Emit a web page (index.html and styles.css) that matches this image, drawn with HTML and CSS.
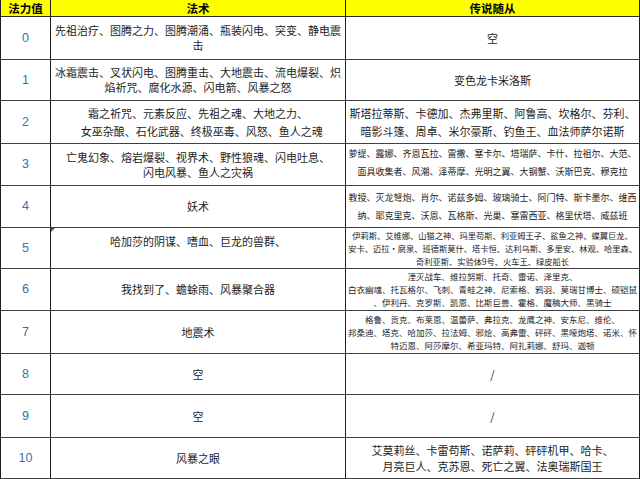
FILE: index.html
```html
<!DOCTYPE html>
<html lang="zh-CN">
<head>
<meta charset="utf-8">
<title>法力值表</title>
<link rel="stylesheet" href="styles.css">
</head>
<body>
<div class="sheet">
  <div class="cell hd c1">法力值</div>
  <div class="cell hd c2">法术</div>
  <div class="cell hd c3">传说随从</div>

  <div class="cell num c1">0</div>
  <div class="cell c2 f11 lh15">先祖治疗、图腾之力、图腾潮涌、瓶装闪电、突变、静电震<br>击</div>
  <div class="cell c3 f11">空</div>

  <div class="cell num c1">1</div>
  <div class="cell c2 f11 lh15">冰霜震击、叉状闪电、图腾重击、大地震击、流电爆裂、炽<br>焰祈咒、腐化水源、闪电箭、风暴之怒</div>
  <div class="cell c3 f11">变色龙卡米洛斯</div>

  <div class="cell num c1">2</div>
  <div class="cell c2 f11 lh18">霜之祈咒、元素反应、先祖之魂、大地之力、<br>&nbsp;&nbsp;&nbsp;女巫杂酿、石化武器、终极巫毒、风怒、鱼人之魂</div>
  <div class="cell c3 f11 lh18">斯塔拉蒂斯、卡德加、杰弗里斯、阿鲁高、坎格尔、芬利、<br>暗影斗篷、周卓、米尔豪斯、钓鱼王、血法师萨尔诺斯</div>

  <div class="cell num c1">3</div>
  <div class="cell c2 f11 lh15">亡鬼幻象、熔岩爆裂、视界术、野性狼魂、闪电吐息、<br>闪电风暴、鱼人之灾祸</div>
  <div class="cell c3 f9 lh18 up2">萝缇、露娜、齐恩瓦拉、雷撒、塞卡尔、塔瑞萨、卡什、拉祖尔、大范、<br>面具收集者、风潮、泽蒂摩、光明之翼、大钢蟹、沃斯巴克、穆克拉</div>

  <div class="cell num c1">4</div>
  <div class="cell c2 f11">妖术</div>
  <div class="cell c3 f9 lh18">教授、灭龙弩炮、肖尔、诺兹多姆、玻璃骑士、阿门特、斯卡墨尔、维西<br>纳、耶克里克、沃恩、瓦格斯、光巢、塞雷西亚、格里伏塔、威兹班</div>

  <div class="cell num c1">5</div>
  <div class="cell c2 f11 lh13 flag">哈加莎的阴谋、嗜血、巨龙的兽群、<br>&nbsp;</div>
  <div class="cell c3 f83 lh13">伊莉斯、艾维娜、山猫之神、玛里苟斯、利亚姆王子、鲨鱼之神、蝶翼巨龙、<br>安卡、迈拉·腐泉、班德斯莫什、塔卡恒、达利乌斯、多里安、林观、哈里森、<br>奇利亚斯、实验体9号、火车王、绿皮船长</div>

  <div class="cell num c1">6</div>
  <div class="cell c2 f11">我找到了、蟾蜍雨、风暴聚合器</div>
  <div class="cell c3 f85 lh13">湮灭战车、维拉努斯、托奇、雷诺、泽里克、<br>白衣幽魂、托瓦格尔、飞刺、青蛙之神、尼索格、鸦羽、莫瑞甘博士、硕铠鼠<br>、伊利丹、克罗斯、凯恩、比斯巨兽、霍格、魔稿大师、黑骑士</div>

  <div class="cell num c1">7</div>
  <div class="cell c2 f11">地震术</div>
  <div class="cell c3 f85 lh13">格鲁、贡克、布莱恩、温蕾萨、弗拉克、龙鹰之神、安东尼、维伦、<br>邦桑迪、塔克、哈加莎、拉法姆、邪烩、高弗雷、砰砰、黑嚎炮塔、诺米、怀<br>特迈恩、阿莎摩尔、希亚玛特、阿扎莉娜、舒玛、迦顿</div>

  <div class="cell num c1">8</div>
  <div class="cell c2 f11">空</div>
  <div class="cell c3 f11">/</div>

  <div class="cell num c1">9</div>
  <div class="cell c2 f11">空</div>
  <div class="cell c3 f11">/</div>

  <div class="cell num c1">10</div>
  <div class="cell c2 f11">风暴之眼</div>
  <div class="cell c3 f11 lh16">艾莫莉丝、卡雷苟斯、诺萨莉、砰砰机甲、哈卡、<br>月亮巨人、克苏恩、死亡之翼、法奥瑞斯国王</div>
</div>
</body>
</html>
```

FILE: styles.css
```css
html, body {
  margin: 0;
  padding: 0;
  background: #ffffff;
}

.sheet {
  display: grid;
  grid-template-columns: 51px 295px 294px;
  grid-template-rows: 17px 43px 41px 43px 42px 42px 41px 42px 43px 41px 43px 41px;
  width: 640px;
  font-family: "Noto Sans CJK SC", "Noto Sans", sans-serif;
  color: #1c1c1c;
}

.cell {
  box-sizing: border-box;
  display: flex;
  flex-direction: column;
  justify-content: center;
  align-items: center;
  text-align: center;
  white-space: nowrap;
  overflow: hidden;
  border-right: 1px solid #1e1e1e;
  border-bottom: 1px solid #404040;
  position: relative;
  line-height: 15px;
}

.c1 {
  border-left: 1px solid #1e1e1e;
}

.hd {
  background: #ffff00;
  font-weight: bold;
  font-size: 11.5px;
  line-height: 14px;
  color: #000000;
  border-bottom-color: #2a2a2a;
}

.num {
  font-family: "Liberation Sans", Arial, sans-serif;
  font-size: 12.5px;
  color: #2e74b5;
}

.f11 { font-size: 11px; }
.f9 { font-size: 9px; }
.f85 { font-size: 8.5px; }
.f83 { font-size: 8.25px; }

.lh13 { line-height: 13px; }
.lh15 { line-height: 15px; }
.lh16 { line-height: 16px; }
.lh18 { line-height: 18px; }

.up2 { padding-bottom: 4px; }

.flag::before {
  content: "";
  position: absolute;
  left: 0;
  top: 0;
  width: 0;
  height: 0;
  border-top: 4px solid #2f6b2f;
  border-right: 4px solid transparent;
}
```
